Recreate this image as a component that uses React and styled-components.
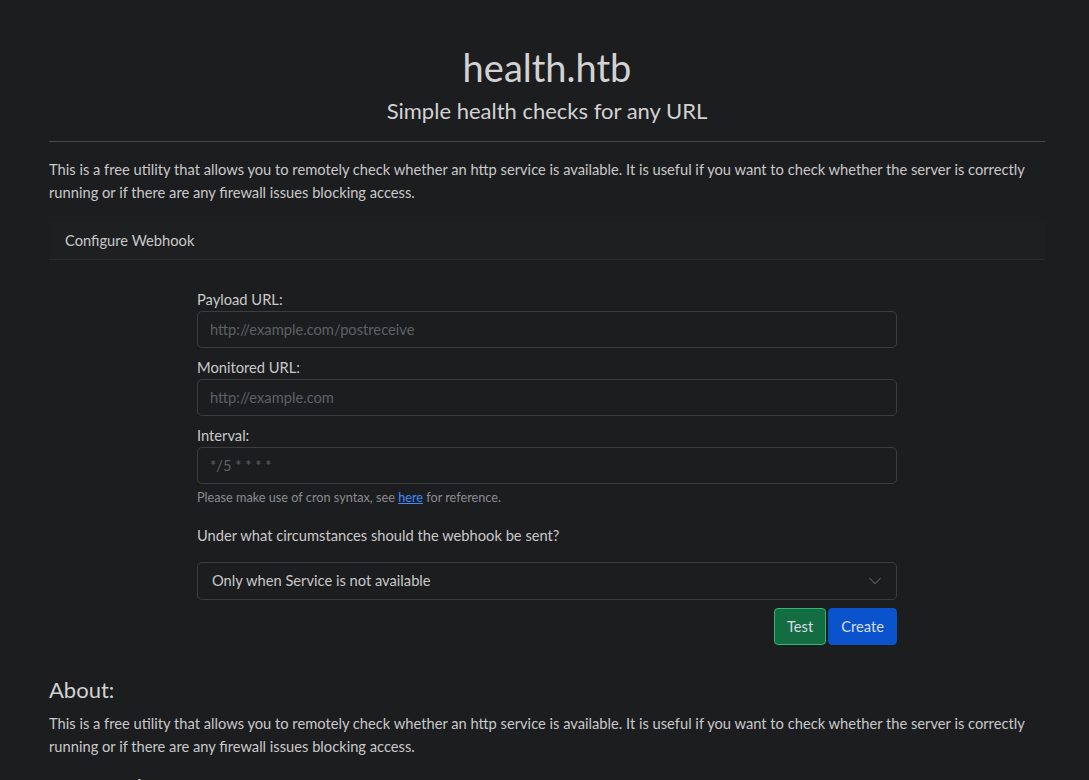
import React from 'react';
import styled, {createGlobalStyle} from 'styled-components';

const GlobalStyle = createGlobalStyle`
  * {
    box-sizing: border-box;
  }

  body {
    margin: 0;
    background: #1c1d1f;
    color: #c9c9c9;
    font-family: Lato, "Noto Sans", sans-serif;
    font-size: 14.7px;
    line-height: 23px;
  }
`;

const App = () => {
    return (
        <>
            <GlobalStyle/>
            <Page>
                <Header>
                    <Title>health.htb</Title>
                    <Subtitle>Simple health checks for any URL</Subtitle>
                </Header>
                <Rule/>
                <Text>
                    This is a free utility that allows you to remotely check whether an http service is available.
                    It is useful if you want to check whether the server is correctly running or if there are any
                    firewall issues blocking access.
                </Text>
                <Card>
                    <CardHeader>Configure Webhook</CardHeader>
                    <Form>
                        <Field>
                            <Label>Payload URL:</Label>
                            <Input placeholder="http://example.com/postreceive"/>
                        </Field>
                        <Field>
                            <Label>Monitored URL:</Label>
                            <Input placeholder="http://example.com"/>
                        </Field>
                        <Field>
                            <Label>Interval:</Label>
                            <Input placeholder="*/5 * * * *"/>
                            <Help>
                                Please make use of cron syntax, see <a href="#">here</a> for reference.
                            </Help>
                        </Field>
                        <Question>Under what circumstances should the webhook be sent?</Question>
                        <SelectBox>
                            <span>Only when Service is not available</span>
                            <svg width="14" height="14" viewBox="0 0 16 16" fill="none" stroke="#55575b"
                                 strokeWidth="1.5" strokeLinecap="round" strokeLinejoin="round">
                                <path d="M2 5l6 6 6-6"/>
                            </svg>
                        </SelectBox>
                        <Actions>
                            <Button variant="success">Test</Button>
                            <Button variant="primary">Create</Button>
                        </Actions>
                    </Form>
                </Card>
                <SectionTitle>About:</SectionTitle>
                <Text>
                    This is a free utility that allows you to remotely check whether an http service is available.
                    It is useful if you want to check whether the server is correctly running or if there are any
                    firewall issues blocking access.
                </Text>
                <SectionTitle>For Developers:</SectionTitle>
                <Text>
                    Once the webhook has been created, the webhook recipient is periodically informed about the
                    status of the monitored application by a POST request containing various details.
                </Text>
            </Page>
        </>
    )
}

const Page = styled.div`
  width: 996px;
  margin: 0 0 0 49px;
  padding-top: 45px;
`;

const Header = styled.div`
  text-align: center;
`;

const Title = styled.h1`
  margin: 0;
  font-size: 38px;
  font-weight: 400;
  line-height: 1.2;
  color: #d2d2d2;
`;

const Subtitle = styled.div`
  margin-top: 7px;
  font-size: 22px;
  line-height: 1.2;
  color: #d2d2d2;
`;

const Rule = styled.hr`
  margin: 17px 0 16px;
  border: 0;
  border-top: 1px solid #48494c;
`;

const Text = styled.p`
  margin: 0 0 16px;
`;

const Card = styled.div`
  margin-top: 18px;
`;

const CardHeader = styled.div`
  padding: 7px 16px;
  background: #1e1f21;
  border-bottom: 1px solid #2b2c2f;
`;

const Form = styled.div`
  width: 700px;
  margin: 0 auto;
  padding: 28px 0 16px;
`;

const Field = styled.div`
  margin-bottom: 8px;
`;

const Label = styled.div`
  margin-bottom: 0;
`;

const Input = styled.input`
  display: block;
  width: 100%;
  height: 37px;
  padding: 0 12px;
  background: #1c1d1f;
  border: 1px solid #3c3d40;
  border-radius: 5px;
  color: #c9c9c9;
  font: inherit;

  &::placeholder {
    color: #5f6064;
  }
`;

const Help = styled.div`
  margin-top: 3px;
  font-size: 12.7px;
  line-height: 20px;
  color: #8b8c8f;

  a {
    color: #3d8bfd;
  }
`;

const Question = styled.div`
  margin: 17px 0 15px;
`;

const SelectBox = styled.div`
  display: flex;
  align-items: center;
  justify-content: space-between;
  height: 38px;
  padding: 0 14px;
  border: 1px solid #3c3d40;
  border-radius: 5px;
`;

const Actions = styled.div`
  display: flex;
  justify-content: flex-end;
  gap: 2px;
  margin-top: 8px;
`;

const Button = styled.button`
  height: 37px;
  padding: 0 12px;
  border-radius: 4px;
  font: inherit;
  color: #d8dde6;
  background: ${p => p.variant === 'success' ? '#146c43' : '#0a53cc'};
  border: 1px solid ${p => p.variant === 'success' ? '#2fb86f' : '#0a53cc'};
`;

const SectionTitle = styled.h4`
  margin: 16px 0 9px;
  font-size: 22px;
  font-weight: 400;
  line-height: 1.2;
  color: #d2d2d2;
`;

export default App;
